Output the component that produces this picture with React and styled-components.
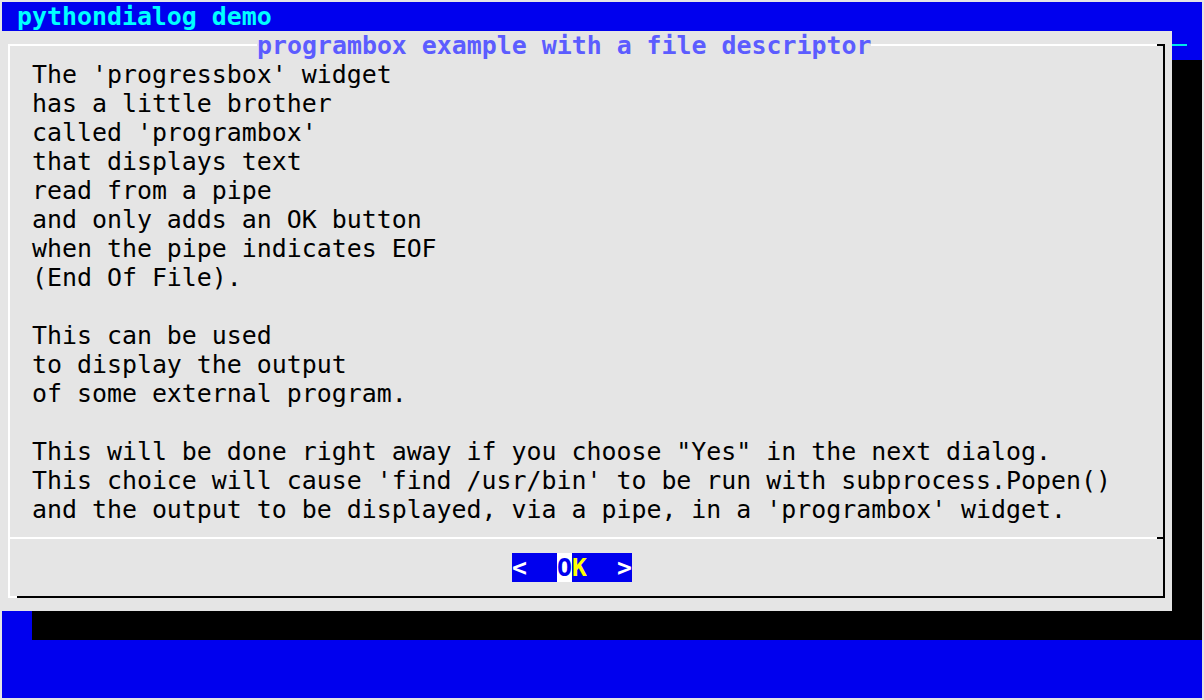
import React from 'react';
import styled, { createGlobalStyle } from 'styled-components';

const BLUE = '#0000ee';
const GRAY = '#e5e5e5';

const GlobalStyle = createGlobalStyle`
  html, body {
    margin: 0;
    padding: 0;
    background: ${GRAY};
  }
  body {
    padding: 2px;
    font-family: "DejaVu Sans Mono", "Liberation Mono", monospace;
    font-size: 24.9px;
    line-height: 29px;
  }
`;

const Screen = styled.div`
  display: grid;
  grid-template-columns: repeat(80, 15px);
  grid-template-rows: repeat(24, 29px);
  width: 1200px;
  height: 696px;
  background: ${BLUE};
`;

const BackTitle = styled.div`
  grid-row: 1;
  grid-column: 1 / -1;
  padding-left: 15px;
  color: #00ffff;
  font-weight: bold;
  white-space: pre;
`;

const BackLine = styled.div`
  grid-row: 2;
  grid-column: 79;
  align-self: start;
  margin-top: 13px;
  height: 2px;
  background: #00e8e8;
`;

const Shadow = styled.div`
  grid-row: ${(p) => p.$rows};
  grid-column: ${(p) => p.$cols};
  background: #000;
`;

const Dialog = styled.div`
  grid-row: 2 / 22;
  grid-column: 1 / 79;
  background: ${GRAY};
  display: flex;
  flex-direction: column;
  padding: 13px 7px 13px 6px;
`;

const Frame = styled.div`
  position: relative;
  flex: 1;
  display: flex;
  flex-direction: column;
  border-style: solid;
  border-width: 2px;
  border-color: #fff #000 #000 #fff;

  &::before {
    content: '';
    position: absolute;
    left: -2px;
    bottom: -2px;
    width: 9px;
    height: 2px;
    background: #fff;
  }

  &::after {
    content: '';
    position: absolute;
    right: -2px;
    top: -2px;
    width: 8px;
    height: 2px;
    background: #000;
  }
`;

const Title = styled.div`
  position: absolute;
  top: -15px;
  left: 247px;
  background: ${GRAY};
  color: #5c5cff;
  font-weight: bold;
  white-space: pre;
`;

const Body = styled.div`
  padding: 14px 0 0 22px;
  color: #000;
  white-space: pre;
  height: 464px;
`;

const Separator = styled.div`
  display: flex;
  margin-top: 13px;
  height: 2px;
`;

const SepLine = styled.div`
  flex: ${(p) => (p.$end ? '0 0 6px' : '1')};
  background: ${(p) => (p.$end ? '#000' : '#fff')};
`;

const ButtonRow = styled.div`
  display: flex;
  margin-top: 14px;
  padding-left: 502px;
  height: 29px;
`;

const Key = styled.span`
  width: 15px;
  text-align: center;
  font-weight: bold;
  white-space: pre;
  background: ${(p) => p.$bg || BLUE};
  color: ${(p) => p.$fg || '#fff'};
`;

const lines = [
  "The 'progressbox' widget",
  'has a little brother',
  "called 'programbox'",
  'that displays text',
  'read from a pipe',
  'and only adds an OK button',
  'when the pipe indicates EOF',
  '(End Of File).',
  '',
  'This can be used',
  'to display the output',
  'of some external program.',
  '',
  'This will be done right away if you choose "Yes" in the next dialog.',
  "This choice will cause 'find /usr/bin' to be run with subprocess.Popen()",
  "and the output to be displayed, via a pipe, in a 'programbox' widget.",
];

export default function App() {
  return (
    <>
      <GlobalStyle />
      <Screen>
        <BackTitle>pythondialog demo</BackTitle>
        <BackLine />
        <Dialog>
          <Frame>
            <Title>programbox example with a file descriptor</Title>
            <Body>{lines.join('\n')}</Body>
            <Separator>
              <SepLine />
              <SepLine $end />
            </Separator>
            <ButtonRow>
              <Key>{'<'}</Key>
              <Key> </Key>
              <Key> </Key>
              <Key $bg="#fff" $fg={BLUE}>O</Key>
              <Key $fg="#ffff00">K</Key>
              <Key> </Key>
              <Key> </Key>
              <Key>{'>'}</Key>
            </ButtonRow>
          </Frame>
        </Dialog>
        <Shadow $rows="3 / 23" $cols="79 / 81" />
        <Shadow $rows="22" $cols="3 / 81" />
      </Screen>
    </>
  );
}
